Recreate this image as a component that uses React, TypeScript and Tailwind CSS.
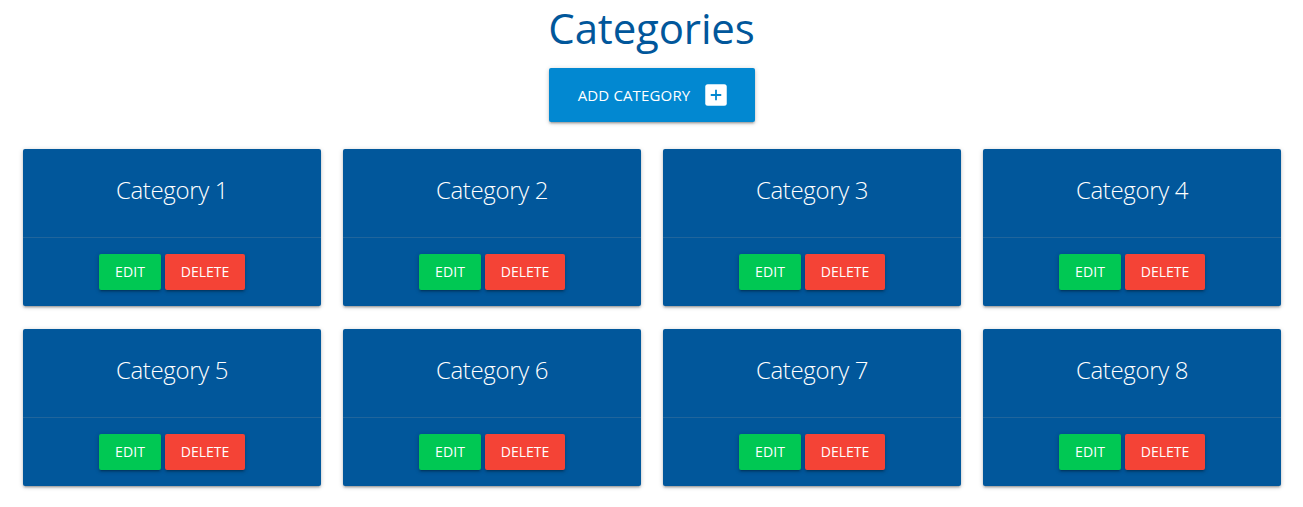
import React from 'react';

const shadow =
  'shadow-[0_2px_2px_0_rgba(0,0,0,0.14),0_3px_1px_-2px_rgba(0,0,0,0.12),0_1px_5px_0_rgba(0,0,0,0.2)]';

function AddBoxIcon() {
  return (
    <svg className="size-[28px]" viewBox="0 0 28 28" fill="none" aria-hidden="true">
      <rect x="3.25" y="3.25" width="21.5" height="21.5" rx="2.5" fill="#fff" />
      <path d="M8.75 14h10.5M14 8.75v10.5" stroke="#0288d1" strokeWidth="1.8" />
    </svg>
  );
}

function ActionButton({ label, tone }: { label: string; tone: string }) {
  return (
    <button className={`flex h-9 items-center justify-center rounded-[2px] pb-0.5 pl-px text-[14px] text-white ${shadow} ${tone}`}>
      {label}
    </button>
  );
}

function CategoryCard({ name }: { name: string }) {
  return (
    <article className={`flex h-[157px] flex-col rounded-[2px] bg-[#01579b] text-white ${shadow}`}>
      <div className="flex h-[88px] justify-center pl-px pt-[23px]">
        <h2 className="h-9 whitespace-nowrap text-[24px] font-light leading-9 tracking-[-0.35px]">{name}</h2>
      </div>
      <div className="flex justify-center gap-1 border-t border-[#a0a0a0]/20 pt-4">
        <ActionButton label="EDIT" tone="w-[62px] bg-[#00c853] tracking-[0.1px]" />
        <ActionButton label="DELETE" tone="w-20 bg-[#f44336]" />
      </div>
    </article>
  );
}

export default function App() {
  return (
    <main className="flex h-[507px] flex-col items-center overflow-hidden bg-white font-['Open_Sans','Noto_Sans',sans-serif]">
      <h1 className="flex h-[68px] items-start whitespace-nowrap text-[42px] leading-[56px] tracking-[-0.15px] text-[#01579b]">
        Categories
      </h1>
      <button className={`flex h-[54px] w-[206px] items-center justify-center rounded-[2px] bg-[#0288d1] pl-[5px] text-[15px] text-white ${shadow}`}>
        <span className="mr-3 whitespace-nowrap tracking-[0.15px]">ADD CATEGORY</span>
        <AddBoxIcon />
      </button>
      <section className="mt-[27px] grid w-[1258px] grid-cols-4 gap-x-[22px] gap-y-[23px]">
        {[1, 2, 3, 4, 5, 6, 7, 8].map((n) => (
          <CategoryCard key={n} name={`Category ${n}`} />
        ))}
      </section>
    </main>
  );
}
